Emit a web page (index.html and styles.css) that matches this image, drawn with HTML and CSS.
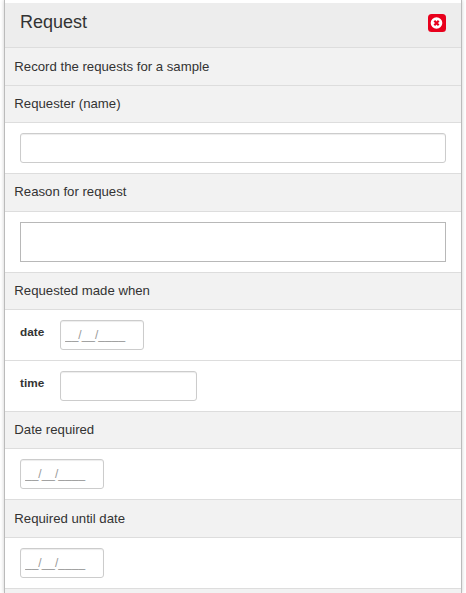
FILE: index.html
```html
<!DOCTYPE html>
<html lang="en">
<head>
<meta charset="utf-8">
<title>Request</title>
<link rel="stylesheet" href="styles.css">
</head>
<body>
<main class="panel">
  <header class="panel-header">
    <h1>Request</h1>
    <button class="close" type="button" aria-label="Close">
      <svg width="18" height="18" viewBox="0 0 18 18"><rect width="18" height="18" rx="3.5" fill="#e8001c"/><circle cx="8.5" cy="9" r="5.8" fill="#fff"/><path d="M6.3 6.8l4.4 4.4M10.7 6.8l-4.4 4.4" stroke="#e8001c" stroke-width="2.2"/></svg>
    </button>
  </header>
  <div class="label tall low">Record the requests for a sample</div>
  <div class="label">Requester (name)</div>
  <div class="field"><input class="full" type="text"></div>
  <div class="label tall">Reason for request</div>
  <div class="field area"><textarea></textarea></div>
  <div class="label">Requested made when</div>
  <div class="field"><label for="date">date</label><input id="date" class="date" type="text" placeholder="__/__/____"></div>
  <div class="field"><label for="time">time</label><input id="time" class="time" type="text"></div>
  <div class="label">Date required</div>
  <div class="field"><input class="date" type="text" placeholder="__/__/____"></div>
  <div class="label tall low">Required until date</div>
  <div class="field"><input class="date" type="text" placeholder="__/__/____"></div>
  <div class="next"></div>
</main>
</body>
</html>
```
FILE: styles.css
```css
* { box-sizing: border-box; }
body {
  margin: 0;
  height: 593px;
  overflow: hidden;
  background: #fff;
  color: #333;
  font: 13.2px/20px "Liberation Sans", Arial, sans-serif;
}
.panel {
  width: 458px;
  height: 593px;
  margin-left: 4px;
  padding-top: 3px;
  border: solid #bbb;
  border-width: 0 1px;
  box-shadow: 0 0 4px rgba(0, 0, 0, .2);
}
.panel-header {
  display: flex;
  justify-content: space-between;
  height: 45px;
  padding: 8px 15px 0;
  background: #ededed;
  border-bottom: 1px solid #ddd;
}
h1 { margin: 0; font-size: 18px; font-weight: 400; line-height: 22px; }
.close { width: 18px; height: 18px; margin-top: 3px; padding: 0; border: 0; background: none; }
.close svg { display: block; }
.label {
  height: 37px;
  padding: 8px 9.3px 0;
  background: #f2f2f2;
  border-bottom: 1px solid #ddd;
}
.label.tall { height: 38px; }
.label.low { padding-top: 9px; }
.next { height: 4px; background: #f2f2f2; }
.field {
  display: flex;
  align-items: flex-start;
  height: 51px;
  padding: 10px 15px;
  background: #fff;
  border-bottom: 1px solid #ddd;
}
.field.area { height: 61px; }
.field label { width: 40px; padding-top: 2px; font-size: 11.8px; font-weight: 700; }
input, textarea {
  display: block;
  margin: 0;
  padding: 4px;
  border: 1px solid #ccc;
  border-radius: 3px;
  background: #fff;
  color: #555;
  font: 12px/20px "Liberation Sans", Arial, sans-serif;
}
input { height: 30px; box-shadow: inset 0 1px 1px rgba(0, 0, 0, .075); }
input::placeholder { color: #999; opacity: 1; }
.full { width: 426px; }
.date { width: 84px; }
.time { width: 137px; }
textarea { width: 426px; height: 40px; border-color: #b8b8b8; border-radius: 0; resize: none; }
```
